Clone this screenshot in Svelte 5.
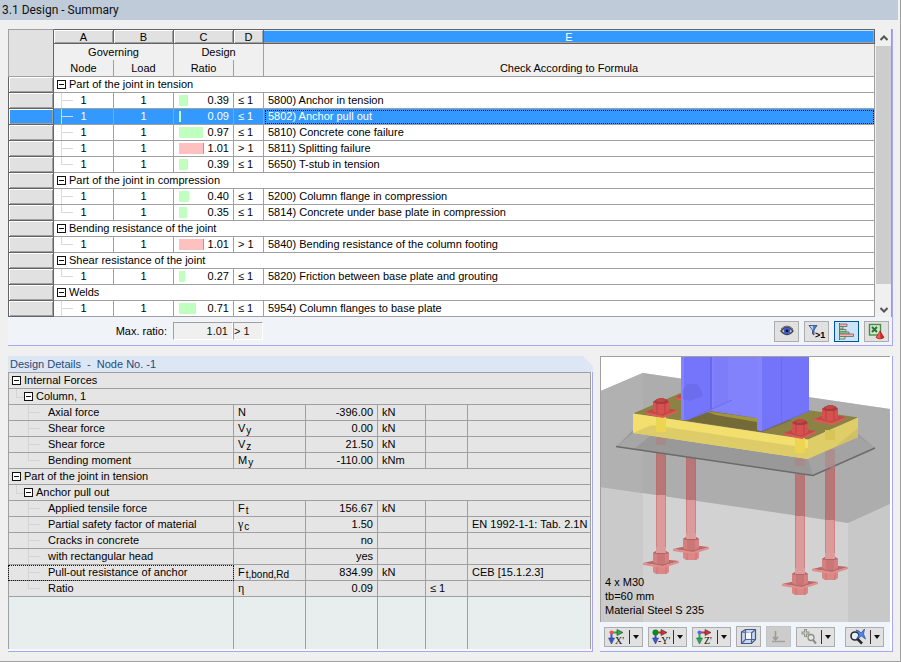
<script>
  const groups = $state([
    { title: 'Part of the joint in tension', open: true, rows: [
      { ratio: 0.39, code: 5800, text: 'Anchor in tension' },
      { ratio: 0.09, code: 5802, text: 'Anchor pull out' },
      { ratio: 0.97, code: 5810, text: 'Concrete cone failure' },
      { ratio: 1.01, code: 5811, text: 'Splitting failure' },
      { ratio: 0.39, code: 5650, text: 'T-stub in tension' }
    ] },
    { title: 'Part of the joint in compression', open: true, rows: [
      { ratio: 0.4, code: 5200, text: 'Column flange in compression' },
      { ratio: 0.35, code: 5814, text: 'Concrete under base plate in compression' }
    ] },
    { title: 'Bending resistance of the joint', open: true, rows: [
      { ratio: 1.01, code: 5840, text: 'Bending resistance of the column footing' }
    ] },
    { title: 'Shear resistance of the joint', open: true, rows: [
      { ratio: 0.27, code: 5820, text: 'Friction between base plate and grouting' }
    ] },
    { title: 'Welds', open: true, more: true, rows: [
      { ratio: 0.71, code: 5954, text: 'Column flanges to base plate' }
    ] }
  ]);
  let selected = $state(5802);

  const details = [
    { level: 0, name: 'Internal Forces' },
    { level: 1, name: 'Column, 1' },
    { name: 'Axial force', sym: 'N', value: '-396.00', unit: 'kN' },
    { name: 'Shear force', sym: 'V', sub: 'y', value: '0.00', unit: 'kN' },
    { name: 'Shear force', sym: 'V', sub: 'z', value: '21.50', unit: 'kN' },
    { name: 'Bending moment', sym: 'M', sub: 'y', value: '-110.00', unit: 'kNm', last: true },
    { level: 0, name: 'Part of the joint in tension' },
    { level: 1, name: 'Anchor pull out' },
    { name: 'Applied tensile force', sym: 'F', sub: 't', value: '156.67', unit: 'kN' },
    { name: 'Partial safety factor of material', sym: 'γ', sub: 'c', value: '1.50', note: 'EN 1992-1-1: Tab. 2.1N' },
    { name: 'Cracks in concrete', value: 'no' },
    { name: 'with rectangular head', value: 'yes' },
    { name: 'Pull-out resistance of anchor', sym: 'F', sub: 't,bond,Rd', value: '834.99', unit: 'kN', note: 'CEB [15.1.2.3]', focus: true },
    { name: 'Ratio', sym: 'η', value: '0.09', limit: '≤ 1', last: true }
  ];

  const rods = [
    { x: 691, grout: 453, foot: 549, split: 500 },
    { x: 661, grout: 449, foot: 563, split: 495 },
    { x: 830, grout: 466, foot: 569, split: 520 },
    { x: 800, grout: 474, foot: 584, split: 516 }
  ];
  const barWidth = (r) => Math.min(25, Math.floor(r * 25));
</script>

{#snippet nut(x, y)}
  <g transform="translate({x} {y})">
    <path d="M-16 0 L-3 -5 L16 -2 L2 4Z" fill="#c34848" />
    <path d="M-16 0 L2 4 L16 -2 V0 L2 6 L-16 2Z" fill="#e05858" />
    <path d="M-8 -10 L-4 -13 H5 L8 -10 V-1 L4 2 H-4 L-8 -1Z" fill="#d85151" />
    <path d="M-8 -10 L-4 -13 H5 L8 -10 L4 -8 H-4Z" fill="#a83c3c" />
    <path d="M-5 -12 L-2 -14 H3 L5 -12 L2 -10 H-3Z" fill="#c14646" />
    <path d="M-4 -8 V2 M4 -8 V2" stroke="#b64141" stroke-width="1" />
  </g>
{/snippet}

{#snippet foot(x, y)}
  <g transform="translate({x} {y})">
    <path d="M-8 2 H8 V9 L5 11 H-5 L-8 9Z" fill="#dc8686" />
    <path d="M-4 3 V11 M5 3 V11" stroke="#c97676" />
    <path d="M-18 0 L0 -4 L18 -2 L2 3Z" fill="#b96a6a" />
    <path d="M-18 0 L2 3 L18 -2 V0 L2 5 L-18 2Z" fill="#e38c8c" />
    <path d="M-8 -10 L-5 -12 H5 L8 -10 V-1 L4 1 H-4 L-8 -1Z" fill="#d57f7f" />
    <path d="M-8 -10 L-5 -12 H5 L8 -10 L4 -9 H-4Z" fill="#b06464" />
    <path d="M-4 -9 V1 H4 V-9Z" fill="#c87676" />
    <rect x="-5" y="-16" width="10" height="6" fill="#dc9c9c" />
  </g>
{/snippet}

{#snippet axis(label, across, down, dot, textX)}
  <svg width="22" height="16" viewBox="-2 0 22 16" aria-hidden="true">
    <path d="M3 3.500H10" stroke={across} stroke-width="2" />
    <path d="M9 0.500 L15 3.500 L9 6.500Z" fill={across} stroke="#333" stroke-width=".6" />
    <path d="M3.500 4V11" stroke={down} stroke-width="2" />
    <path d="M0.500 9 L3.500 15 L6.500 9Z" fill={down} stroke="#335" stroke-width=".5" />
    <circle cx="3.500" cy="3.500" r={dot === '#0a8a1a' ? 3 : 2} fill={dot} />
    <text x={textX} y="15" font-family="Liberation Serif, serif" font-size="10" fill="#111">{label}</text>
  </svg>
{/snippet}

{#snippet drop(label)}
  <button class="arrow" aria-label={label}><svg width="6" height="4" viewBox="0 0 6 4"><path d="M0 0H6L3 4Z" fill="#111" /></svg></button>
{/snippet}

<div class="window">
  <h1>3.1 Design - Summary</h1>
  <main>
    <section class="panel summary">
      <div class="grid-area">
        <table class="checks">
          <colgroup><col class="c-row" /><col class="c-60" /><col class="c-60" /><col class="c-60" /><col class="c-30" /><col /></colgroup>
          <thead>
            <tr class="letters"><th class="corner" rowspan="3" aria-label="Row"></th><th>A</th><th>B</th><th>C</th><th>D</th><th class="active">E</th></tr>
            <tr class="names"><th colspan="2">Governing</th><th colspan="2">Design</th><th></th></tr>
            <tr class="names low"><th>Node</th><th>Load</th><th>Ratio</th><th></th><th>Check According to Formula</th></tr>
          </thead>
          <tbody>
            {#each groups as g}
              <tr>
                <th class="rowhead"></th>
                <td colspan="5" class="group"><div class="tree"><button class="toggle" class:closed={!g.open} aria-label="Toggle {g.title}" aria-expanded={g.open} onclick={() => (g.open = !g.open)}></button>{g.title}</div></td>
              </tr>
              {#if g.open}
                {#each g.rows as r, i}
                  <tr class:selected={selected === r.code} onclick={() => (selected = r.code)}>
                    <th class="rowhead"></th>
                    <td class="mid branch" class:last={i === g.rows.length - 1 && !g.more}>1</td>
                    <td class="mid">1</td>
                    <td><div class="ratio"><span class="bar" class:over={r.ratio > 1} style:width="{barWidth(r.ratio)}px"></span><span class="num">{r.ratio.toFixed(2)}</span></div></td>
                    <td class="cell">{r.ratio > 1 ? '> 1' : '≤ 1'}</td>
                    <td class="cell formula">{r.code}) {r.text}</td>
                  </tr>
                {/each}
              {/if}
            {/each}
          </tbody>
        </table>
        <div class="scroll">
          <button aria-label="Scroll up"><svg width="8" height="6" viewBox="0 0 8 6"><path d="M0.500 5 L4 1.500 L7.500 5" fill="none" stroke="#555" stroke-width="2" /></svg></button>
          <div class="thumb"></div>
          <button class="down" aria-label="Scroll down"><svg width="8" height="6" viewBox="0 0 8 6"><path d="M0.500 1 L4 4.500 L7.500 1" fill="none" stroke="#555" stroke-width="2" /></svg></button>
        </div>
      </div>
      <footer>
        <label for="max-ratio">Max. ratio:</label>
        <input id="max-ratio" class="max" value="1.01" readonly />
        <input class="cmp" aria-label="Ratio comparison" value="> 1" readonly />
        <div class="actions">
          <button class="tool" aria-label="View mode">
            <svg width="14" height="12" viewBox="0 0 14 12"><path d="M1 6 Q7 -1.500 13 6 Q7 13 1 6Z" fill="#f4f4f4" stroke="#444" stroke-width="1.300" /><circle cx="7" cy="5.800" r="3.400" fill="#3f5cd0" /><circle cx="7" cy="5.800" r="1.400" fill="#05092a" /><path d="M1 4 Q7 -2 13 4" fill="none" stroke="#666" /></svg>
          </button>
          <button class="tool" aria-label="Show ratios greater than 1">
            <svg width="18" height="15" viewBox="0 0 18 15"><path d="M1 1.500H9L6 6V11L4.500 10V6Z" fill="#4d7fe0" stroke="#35466e" stroke-width=".8" /><path d="M2 2H5V6Z" fill="#bcd6ff" /><text x="7" y="14" font-family="Liberation Sans, sans-serif" font-weight="700" font-size="9">&gt;1</text></svg>
          </button>
          <button class="tool on" aria-label="Show ratio bars" aria-pressed="true">
            <svg width="17" height="17" viewBox="0 0 17 17"><path d="M1.500 0V17" stroke="#666" /><g stroke="#666" stroke-width=".8"><path d="M1.500 1H9V3.500H1.500Z" fill="#ffb0b0" /><path d="M1.500 3.500H5V6H1.500Z" fill="#9be79b" /><path d="M1.500 6.500H8V9H1.500Z" fill="#9be79b" /><path d="M1.500 9H11V11H1.500Z" fill="#9be79b" /><path d="M1.500 11H15.500V13.500H1.500Z" fill="#ffb0b0" /><path d="M1.500 13.500H7V16H1.500Z" fill="#b9f0b9" /></g></svg>
          </button>
          <button class="tool" aria-label="Export to Excel">
            <svg width="17" height="17" viewBox="0 0 17 17"><rect x="1.500" y="1.500" width="11" height="10.500" fill="#d5e8d0" stroke="#4c8a4c" stroke-width="1.400" /><rect x="3" y="3" width="7" height="7" fill="#cfe6cc" /><path d="M4 4L9 9M9 4L4 9" stroke="#24752e" stroke-width="2" /><path d="M12 8L16 14.500Q12 17.500 8 14.500Z" fill="#d92323" stroke="#811" stroke-width=".6" /><path d="M12 8L12.500 16L8.500 14.500Z" fill="#ee5a4c" /></svg>
          </button>
        </div>
      </footer>
    </section>

    <div class="lower">
      <section class="details">
        <h2>Design Details&nbsp; -&nbsp; Node No. -1</h2>
        <div class="panel inset">
          <table class="values">
            <colgroup><col class="c-name" /><col class="c-72" /><col class="c-72" /><col class="c-48" /><col class="c-42" /><col /></colgroup>
            <tbody>
              {#each details as d}
                {#if d.level !== undefined}
                  <tr><td colspan="6" class:sub={d.level === 1}><div class="tree"><button class="toggle" aria-label="Toggle {d.name}"></button>{d.name}</div></td></tr>
                {:else}
                  <tr>
                    <td class="name" class:last={d.last} class:focus={d.focus}>{d.name}</td>
                    <td class="cell">{#if d.sym}<span class:greek={d.sym === 'γ' || d.sym === 'η'}>{d.sym}</span>{/if}{#if d.sub}<span class="index">{d.sub}</span>{/if}</td>
                    <td class="num">{d.value}</td>
                    <td class="cell">{d.unit ?? ''}</td>
                    <td class="cell">{d.limit ?? ''}</td>
                    <td class="cell">{d.note ?? ''}</td>
                  </tr>
                {/if}
              {/each}
              <tr class="empty"><td></td><td></td><td></td><td></td><td></td><td></td></tr>
            </tbody>
          </table>
        </div>
      </section>

      <section class="panel view">
        <div class="canvas">
          <svg viewBox="601 357 289 265" role="img" aria-label="Column base with anchors">
            <rect x="601" y="357" width="289" height="265" fill="#fff" />
            <path d="M601 391 L643 373 L890 409 V622 H601Z" fill="#d2d2d2" />
            <path d="M601 391 L643 373 V622 H601Z" fill="#cacaca" />
            <path d="M848 522 L890 504 V622 H848Z" fill="#c8c8c8" />
            <path d="M601 391 L643 373 L890 409 V504 L848 523 L601 487Z" fill="#adadad" />
            <path d="M601 391 L643 373 V493 L601 487Z" fill="#b1b1b1" />

            {#each rods as r}
              <rect x={r.x - 5} y={r.split} width="10" height={r.foot - r.split - 12} fill="#dc9b9b" />
              <rect x={r.x - 5} y={r.grout} width="10" height={r.split - r.grout} fill="#b87777" />
              <path d="M{r.x - 4.500} {r.grout} V{r.foot - 12} M{r.x + 4.500} {r.grout} V{r.foot - 12}" stroke="#bd6666" stroke-opacity=".45" />
              {@render foot(r.x, r.foot)}
            {/each}

            <path d="M616 447 L633 430 L858 434 L875 448 L813 476Z" fill="#999999" />
            <path d="M858 436 L875 448 L813 476 L808 459Z" fill="#a3a3a3" />
            <path d="M633 433 L616 447 L634 449 L650 436Z" fill="#a6a6a6" />
            <path d="M616 446.500 L813 475.500 L875 448" fill="none" stroke="#6b6b6b" stroke-width="1.600" />
            <g fill="#b18282" fill-opacity=".6"><rect x="656" y="435" width="10" height="10" /><rect x="795" y="456" width="10" height="10" /><rect x="825" y="449" width="10" height="19" /></g>

            <path d="M633 413.500 L684 391.500 L858 417.500 L808 439.500Z" fill="#8b8343" />
            <path d="M685 420.500 L711 409 L792 420 L762 432Z" fill="#736a38" />
            <path d="M705 411 L757 418 L757 422 L716 415Z" fill="#a1963c" />
            <path d="M633 413.500 L808 439.500 V459 L633 433Z" fill="#f3df6e" />
            <path d="M633 433 L652 425 L808 448 V459Z" fill="#decc68" />
            <path d="M808 439.500 L858 417.500 V437 L808 459Z" fill="#dfcd68" />
            <path d="M808 459 L835 447 L858 428 V437Z" fill="#d1c065" />
            <g fill="#ecd552"><rect x="656" y="417" width="10" height="15" /><rect x="795" y="438" width="10" height="15" /><rect x="825" y="430" width="10" height="10" fill="#d9c458" /></g>

            {@render nut(691, 397)}
            {@render nut(661, 412)}
            {@render nut(830, 419)}

            <path d="M681 357 H809 V411 L761 431 L757 430 V418 L711 411 L687 420 L681 420Z" fill="#7c7cff" />
            <path d="M681 357 H711 V410 L687 420 L681 420Z" fill="#7575fb" />
            <path d="M681 357 H684 V420 H681Z" fill="#8484ff" />
            <path d="M711 357 H757 V418 L711 411Z" fill="#8282fd" />
            <path d="M714 357 H728 V401 L714 407Z" fill="#7d7df9" />
            <path d="M761 357 H809 V411 L761 431Z" fill="#7474fb" />
            <path d="M757 357 H762 V431 L757 430Z" fill="#8484ff" />
            <path d="M711 357 V410" stroke="#6060e4" stroke-width="1.500" />
            <path d="M781.500 357 V422" stroke="#6c6cf0" stroke-width="1" />
            <path d="M687 420 L732 400 M762 431 L809 411" fill="none" stroke="#6c6cec" stroke-width="1" />
            <path d="M683 390 L687 384 H697 L701 390 L703 396 L689 401 L683 399Z" fill="#6666e6" fill-opacity=".6" />
            {@render nut(800, 433)}
            <g font-family="Liberation Sans, Arial, sans-serif" font-size="11" fill="#000">
              <text x="605" y="586">4 x M30</text>
              <text x="605" y="600">tb=60 mm</text>
              <text x="605" y="614">Material Steel S 235</text>
            </g>
          </svg>
        </div>
        <div class="toolbar">
          <div class="split"><button aria-label="View in X">{@render axis("X'", '#1db83a', '#3657d8', '#f05050', 7)}</button>{@render drop('X view options')}</div>
          <div class="split"><button aria-label="View in -Y">{@render axis("-Y'", '#e02c2c', '#3657d8', '#0a8a1a', 6)}</button>{@render drop('Y view options')}</div>
          <div class="split"><button aria-label="View in Z">{@render axis("Z'", '#e02c2c', '#1db83a', '#5868e8', 8)}</button>{@render drop('Z view options')}</div>
          <button class="tool" aria-label="Isometric view">
            <svg width="17" height="17" viewBox="0 0 17 17"><path d="M1.500 4L5.500 1.500H15.500V11.500L11.500 15.500H1.500Z" fill="#cbd6ef" stroke="#3f568d" stroke-width="1.200" /><path d="M5.500 1.500V11.500H15.500M5.500 11.500L1.500 15.500M1.500 4L11.500 5V15.500M11.500 5L15.500 1.500" fill="none" stroke="#4b639c" stroke-width="1.200" /><path d="M6 4.500H11V11H6Z" fill="#f5f8ff" /></svg>
          </button>
          <button class="tool off" aria-label="Show loads" disabled>
            <svg width="17" height="15" viewBox="0 0 17 15"><path d="M5.500 2V10M3 8L5.500 11L8 8" fill="none" stroke="#9b9d94" stroke-width="1.600" /><path d="M2 12.500H15" stroke="#a3a59c" stroke-width="1.600" /></svg>
          </button>
          <div class="split"><button aria-label="Zoom">
            <svg width="18" height="17" viewBox="0 0 18 17"><path d="M5.500 1V9M1.500 5H9.500" stroke="#92978b" stroke-width="3" /><path d="M5.500 2V8M2.500 5H8.500" stroke="#ccd0c7" stroke-width="1" /><circle cx="11" cy="9.500" r="3" fill="#e4e6e1" stroke="#8b8e85" stroke-width="1.300" /><path d="M13 12L16 15.500" stroke="#8b8e85" stroke-width="2" /></svg>
          </button>{@render drop('Zoom options')}</div>
          <div class="split end"><button aria-label="Cancel zoom">
            <svg width="18" height="17" viewBox="0 0 18 17"><circle cx="6" cy="8" r="4" fill="#e8eef6" stroke="#26282b" stroke-width="1.600" /><path d="M8.500 11L13 15.500" stroke="#26282b" stroke-width="2.500" /><path d="M7 2L10 3L12 5L15.500 1L14.500 6L16.500 11L12.500 8L7.500 11L10 6.500Z" fill="#5584e4" stroke="#264b9f" stroke-width=".7" /></svg>
          </button>{@render drop('More view options')}</div>
        </div>
      </section>
    </div>
  </main>
</div>

<style>
  :global(body) { margin: 0; background: #f0f0f0; }
  .window { box-sizing: border-box; border-right: 1px solid #a0a0a0; border-bottom: 1px solid #a0a0a0; background: #f0f0f0; font: 11px/15px "Liberation Sans", Arial, sans-serif; color: #000; }
  h1, h2 { margin: 0; font-weight: 400; }
  h1 { height: 20px; margin-right: 2px; padding-left: 2px; background: #bfcbd9; font: 12px/20px Roboto, sans-serif; color: #111; }
  main { display: flex; flex-direction: column; gap: 10px; padding: 9px 7px 9px 8px; }
  .panel { border-right: 1px solid #a8a8f0; border-bottom: 1px solid #a8a8f0; }
  button { font: inherit; color: inherit; padding: 0; border: 0; background: none; display: flex; align-items: center; justify-content: center; }
  svg { display: block; }

  table { border-collapse: separate; border-spacing: 0; table-layout: fixed; width: 100%; }
  th, td { box-sizing: border-box; padding: 0; font-weight: 400; border-right: 1px solid #a0a0a0; border-bottom: 1px solid #a0a0a0; height: 16px; line-height: 15px; white-space: nowrap; overflow: hidden; }
  .grid-area { display: flex; gap: 1px; }
  .checks { flex: 1; width: 0; }
  .c-row { width: 46px; } .c-60 { width: 60px; } .c-30 { width: 30px; }
  .checks td { background: #fff; }
  .letters th { height: 15px; line-height: 12px; border-top: 1px solid #646464; border-bottom-color: #646464; border-right-color: #646464; background: #e1e1e1; box-shadow: inset 1px 1px #fff, inset -1px -1px #a0a0a0; }
  .letters .active { background: #39f; color: #fff; box-shadow: inset 0 1px #c7e2ff, inset -1px -1px #a0a0a0; }
  .letters .corner { border-left: 1px solid #a0a0a0; border-top-color: #a0a0a0; border-bottom-color: #a0a0a0; box-shadow: none; }
  .names th { border-bottom: 0; background: #f0f0f0; }
  .low th { height: 17px; line-height: 16px; border-bottom: 1px solid #a0a0a0; }
  .rowhead { border-left: 1px solid #646464; border-right-color: #646464; border-bottom-color: #646464; background: #e1e1e1; box-shadow: inset 1px 1px #fff, inset -1px -1px #a0a0a0; }
  .tree { display: flex; align-items: center; gap: 3px; padding-left: 3px; height: 15px; }
  .toggle { width: 9px; height: 9px; border: 1px solid #111; background: linear-gradient(#111, #111) center / 5px 1px no-repeat #fff; }
  .toggle.closed { background: linear-gradient(#111, #111) center / 5px 1px no-repeat, linear-gradient(#111, #111) center / 1px 5px no-repeat #fff; }
  .mid { text-align: center; }
  .cell { padding-left: 4px; }
  .checks .branch { background: linear-gradient(#dadada, #dadada) 7px 0 / 1px 16px no-repeat, linear-gradient(#dadada, #dadada) 7px 7px / 12px 1px no-repeat #fff; }
  .checks .branch.last { background: linear-gradient(#dadada, #dadada) 7px 0 / 1px 7px no-repeat, linear-gradient(#dadada, #dadada) 7px 7px / 12px 1px no-repeat #fff; }
  .ratio { display: flex; align-items: center; justify-content: space-between; padding-left: 5px; height: 15px; }
  .bar { box-sizing: border-box; height: 11px; background: #c0ffc0; }
  .bar.over { background: #ffc0c0; border-right: 1px solid #a0a0a0; }
  .num { text-align: right; padding-right: 4px; }
  .selected td, .selected .rowhead { background-color: #39f !important; color: #fff; }
  .selected .formula { outline: 1px dotted #111; outline-offset: -2px; }

  .scroll { width: 15px; border-right: 1px solid #a0a0a0; display: flex; flex-direction: column; }
  .scroll button { height: 17px; }
  .thumb { flex: 1; background: #cdcdcd; }
  .scroll .down { height: 33px; align-items: flex-end; padding-bottom: 4px; }

  footer { display: flex; align-items: center; height: 28px; background: #f0f4f9; padding-right: 3px; }
  footer label { width: 159px; text-align: right; margin-right: 6px; }
  input { box-sizing: border-box; height: 18px; padding: 0; border: 1px solid; border-color: #a0a0a0 #fff #fff #a0a0a0; border-radius: 0; background: #f0f0f0; font: inherit; color: #111; }
  .max { width: 60px; padding-right: 4px; text-align: right; }
  .cmp { width: 30px; }
  .actions { display: flex; gap: 5px; margin-left: auto; }
  .tool { box-sizing: border-box; width: 25px; height: 21px; border: 1px solid #adadad; background: #e1e1e1; }
  .tool.on { border-color: #005499; background: #cce4f7; }
  .tool.off { border-color: #c4c4c4; background: #ccc; }

  .lower { display: grid; grid-template-columns: minmax(0, 1fr) 293px; gap: 7px; }
  .details { display: flex; flex-direction: column; }
  h2 { height: 16px; padding-left: 2px; background: #dce6f4; color: #1f4b7d; font: 11px/16px "Liberation Sans", Arial, sans-serif; clip-path: polygon(0 0, calc(100% - 10px) 0, 100% 10px, 100% 100%, 0 100%); }
  .inset { flex: 1; padding: 0 1px 2px 0; background: #f8f8fc; }
  .values { border-top: 1px solid #a0a0a0; }
  .values td { background: #e5e5e5; }
  .values td:first-child { border-left: 1px solid #a0a0a0; }
  .c-name { width: 226px; } .c-72 { width: 72px; } .c-48 { width: 48px; } .c-42 { width: 42px; }
  .sub .tree { padding-left: 15px; }
  .values .sub { background: linear-gradient(#d5d5d5, #d5d5d5) 7px 0 / 1px 8px no-repeat, linear-gradient(#d5d5d5, #d5d5d5) 7px 8px / 8px 1px no-repeat #e5e5e5; }
  .values .name { padding-left: 39px; background: linear-gradient(#d5d5d5, #d5d5d5) 19px 0 / 1px 16px no-repeat, linear-gradient(#d5d5d5, #d5d5d5) 19px 7px / 12px 1px no-repeat #e5e5e5; }
  .values .name.last { background: linear-gradient(#d5d5d5, #d5d5d5) 19px 0 / 1px 7px no-repeat, linear-gradient(#d5d5d5, #d5d5d5) 19px 7px / 12px 1px no-repeat #e5e5e5; }
  .focus { outline: 1px dotted #111; outline-offset: -1px; }
  .index { font: 10px/10px "Liberation Sans", sans-serif; position: relative; top: 2px; margin-left: 1px; }
  .greek { font: 12px/12px "Liberation Serif", serif; }
  .empty td { height: 52px; background: #e8eeee; border-bottom: 0; }

  .view { padding-right: 2px; display: flex; flex-direction: column; background: #fff; }
  .canvas { border-left: 1px solid #a0a0a0; border-top: 1px solid #a0a0a0; }
  .canvas svg { width: 100%; }
  .toolbar { flex: 1; display: flex; align-items: center; gap: 5px; padding: 1px 6px 1px 4px; background: #f0f4fb; }
  .split { box-sizing: border-box; display: flex; align-items: center; width: 39px; height: 20px; border: 1px solid #adadad; background: #e1e1e1; }
  .split button { flex: 1; height: 18px; }
  .split .arrow { flex: 0 0 13px; height: 14px; border-left: 1px solid #333; }
  .split.end { margin-left: auto; }
</style>
